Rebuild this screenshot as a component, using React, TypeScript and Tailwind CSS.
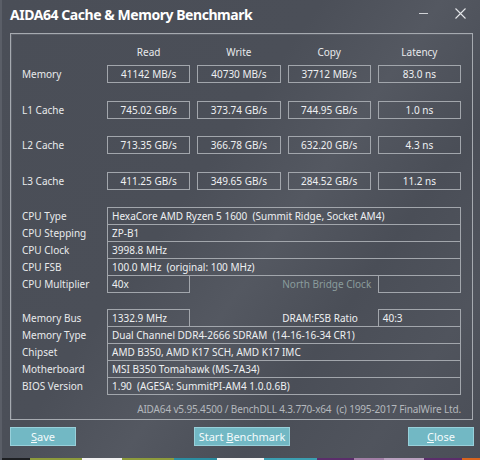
import React from "react";

const bench = [
  { label: "Memory", vals: ["41142 MB/s", "40730 MB/s", "37712 MB/s", "83.0 ns"], mt: "mt-[6px]" },
  { label: "L1 Cache", vals: ["745.02 GB/s", "373.74 GB/s", "744.95 GB/s", "1.0 ns"], mt: "mt-[18px]" },
  { label: "L2 Cache", vals: ["713.35 GB/s", "366.78 GB/s", "632.20 GB/s", "4.3 ns"], mt: "mt-[17px]" },
  { label: "L3 Cache", vals: ["411.25 GB/s", "349.65 GB/s", "284.52 GB/s", "11.2 ns"], mt: "mt-[18px]" },
];

function Label({ children }: { children: React.ReactNode }) {
  return <div className="w-[85px] shrink-0 text-[#e8eaec]">{children}</div>;
}

function FullRow({ label, value, first }: { label: string; value: string; first?: boolean }) {
  return (
    <div className={`flex items-center h-[18px] ${first ? "" : "-mt-px"}`}>
      <Label>{label}</Label>
      <div className="flex-1 h-[18px] border border-[#a2a6ac] pl-[4px] leading-[16px] text-[#eef0f2] whitespace-pre">
        {value}
      </div>
    </div>
  );
}

function SplitRow({
  label,
  v1,
  mid,
  midClass,
  v2,
  first,
}: {
  label: string;
  v1: string;
  mid: string;
  midClass: string;
  v2: string;
  first?: boolean;
}) {
  return (
    <div className={`flex items-center h-[18px] ${first ? "" : "-mt-px"}`}>
      <Label>{label}</Label>
      <div className="flex-1 grid grid-cols-4 gap-[7px] h-[18px]">
        <div className="border border-[#a2a6ac] pl-[4px] leading-[16px] text-[#eef0f2]">{v1}</div>
        <div className="col-span-2 pl-[85px] leading-[18px] whitespace-nowrap">
          <span className={midClass}>{mid}</span>
        </div>
        <div className="border border-[#a2a6ac] pl-[4px] leading-[16px] text-[#eef0f2]">{v2}</div>
      </div>
    </div>
  );
}

function Btn({ pre, u, post, w }: { pre: string; u: string; post: string; w: string }) {
  return (
    <div
      className={`${w} h-[19px] bg-[#72b8c4] border border-[#98d0da] flex items-center justify-center text-[#f4fbfc] text-[11px] leading-none`}
    >
      <span>
        {pre}
        <span className="underline">{u}</span>
        {post}
      </span>
    </div>
  );
}

export default function App() {
  const strip = [
    ["w-[28px]", "bg-[#1d1f22]"],
    ["w-[52px]", "bg-[#8d9b3c]"],
    ["w-[40px]", "bg-[#f2f2f2]"],
    ["w-[52px]", "bg-[#8d9b3c]"],
    ["w-[43px]", "bg-[#2b8ea2]"],
    ["w-[47px]", "bg-[#f4f4f4]"],
    ["w-[53px]", "bg-[#3b9fb2]"],
    ["w-[37px]", "bg-[#5b2d6b]"],
    ["w-[30px]", "bg-[#a27ea6]"],
    ["w-[40px]", "bg-[#b9a0bf]"],
    ["w-[38px]", "bg-[#5b2d6b]"],
    ["flex-1", "bg-[#d8641e]"],
  ];
  return (
    <div className="w-[480px] h-[460px] overflow-hidden flex flex-col bg-[#4b4f58] bg-[linear-gradient(125deg,#4a4e57_0%,#4b4f58_40%,#545861_55%,#4a4e57_70%,#50545d_85%,#4a4e57_100%)] font-['Noto_Sans','DejaVu_Sans',sans-serif] text-[10px] border-l-2 border-[#5a5e67]">
      {/* title bar */}
      <div className="h-[33px] flex items-start pt-[4px] pl-[8px] pr-[14px]">
        <div className="text-[14px] font-bold text-white leading-[22px] tracking-[-0.45px]">
          AIDA64 Cache &amp; Memory Benchmark
        </div>
        <div className="ml-auto flex items-center gap-[27px] h-[22px]">
          <div className="w-[9px] h-px bg-[#d0d2d6] mt-[-4px]" />
          <svg width="11" height="11" viewBox="0 0 11 11" className="mt-[-3px]">
            <path d="M0.5 0.5 L10.5 10.5 M10.5 0.5 L0.5 10.5" stroke="#e4e6e9" strokeWidth="1.1" />
          </svg>
        </div>
      </div>

      {/* group box */}
      <div className="ml-[8px] w-[463px] h-[387px] border border-[#a6aab0] shadow-[inset_1px_1px_0_#5c6069] flex flex-col pl-[11px] pr-[11px] pt-[11px]">
        <div className="flex h-[14px] leading-[14px]">
          <div className="w-[85px] shrink-0" />
          <div className="flex-1 grid grid-cols-4 gap-[7px] text-center text-[#e8eaec]">
            <div>Read</div>
            <div>Write</div>
            <div>Copy</div>
            <div>Latency</div>
          </div>
        </div>
        {bench.map((r) => (
          <div key={r.label} className={`flex items-center h-[18px] ${r.mt}`}>
            <Label>{r.label}</Label>
            <div className="flex-1 grid grid-cols-4 gap-[7px] h-[18px]">
              {r.vals.map((v) => (
                <div
                  key={v}
                  className="border border-[#a2a6ac] text-center leading-[16px] text-[#eef0f2]"
                >
                  {v}
                </div>
              ))}
            </div>
          </div>
        ))}

        <div className="mt-[17px]" />
        <FullRow first label="CPU Type" value="HexaCore AMD Ryzen 5 1600  (Summit Ridge, Socket AM4)" />
        <FullRow label="CPU Stepping" value="ZP-B1" />
        <FullRow label="CPU Clock" value="3998.8 MHz" />
        <FullRow label="CPU FSB" value="100.0 MHz  (original: 100 MHz)" />
        <SplitRow
          label="CPU Multiplier"
          v1="40x"
          mid="North Bridge Clock"
          midClass="text-[#8a9c9c]"
          v2=""
        />

        <div className="mt-[16px]" />
        <SplitRow
          first
          label="Memory Bus"
          v1="1332.9 MHz"
          mid="DRAM:FSB Ratio"
          midClass="text-[#eef0f2]"
          v2="40:3"
        />
        <FullRow label="Memory Type" value="Dual Channel DDR4-2666 SDRAM  (14-16-16-34 CR1)" />
        <FullRow label="Chipset" value="AMD B350, AMD K17 SCH, AMD K17 IMC" />
        <FullRow label="Motherboard" value="MSI B350 Tomahawk (MS-7A34)" />
        <FullRow label="BIOS Version" value="1.90  (AGESA: SummitPI-AM4 1.0.0.6B)" />

        <div className="mt-[7px] text-right text-[#b4b8bd] whitespace-pre leading-[14px] tracking-[-0.15px]">
          AIDA64 v5.95.4500 / BenchDLL 4.3.770-x64  (c) 1995-2017 FinalWire Ltd.
        </div>
      </div>

      {/* buttons */}
      <div className="mt-[7px] ml-[8px] w-[464px] flex items-center justify-between">
        <Btn w="w-[66px]" pre="" u="S" post="ave" />
        <Btn w="w-[96px]" pre="Start " u="B" post="enchmark" />
        <Btn w="w-[66px]" pre="" u="C" post="lose" />
      </div>

      <div className="mt-auto h-[2px] flex">
        {strip.map(([w, c], i) => (
          <div key={i} className={`${w} ${c} h-full`} />
        ))}
      </div>
    </div>
  );
}
